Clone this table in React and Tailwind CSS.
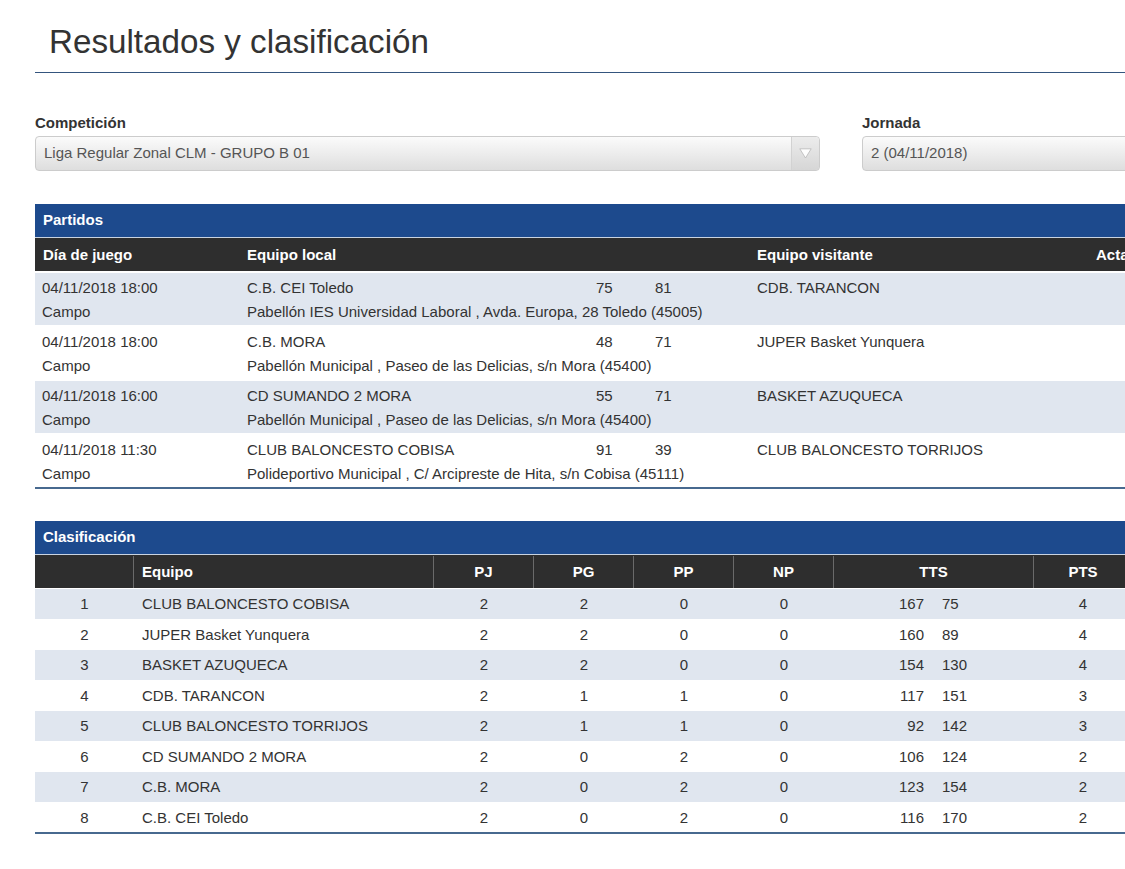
import React from 'react';

const partidos = [
  { fecha: '04/11/2018 18:00', local: 'C.B. CEI Toledo', pl: '75', pv: '81', visitante: 'CDB. TARANCON', campo: 'Pabellón IES Universidad Laboral , Avda. Europa, 28 Toledo (45005)' },
  { fecha: '04/11/2018 18:00', local: 'C.B. MORA', pl: '48', pv: '71', visitante: 'JUPER Basket Yunquera', campo: 'Pabellón Municipal , Paseo de las Delicias, s/n Mora (45400)' },
  { fecha: '04/11/2018 16:00', local: 'CD SUMANDO 2 MORA', pl: '55', pv: '71', visitante: 'BASKET AZUQUECA', campo: 'Pabellón Municipal , Paseo de las Delicias, s/n Mora (45400)' },
  { fecha: '04/11/2018 11:30', local: 'CLUB BALONCESTO COBISA', pl: '91', pv: '39', visitante: 'CLUB BALONCESTO TORRIJOS', campo: 'Polideportivo Municipal , C/ Arcipreste de Hita, s/n Cobisa (45111)' },
];

const clasificacion = [
  [1, 'CLUB BALONCESTO COBISA', 2, 2, 0, 0, 167, 75, 4],
  [2, 'JUPER Basket Yunquera', 2, 2, 0, 0, 160, 89, 4],
  [3, 'BASKET AZUQUECA', 2, 2, 0, 0, 154, 130, 4],
  [4, 'CDB. TARANCON', 2, 1, 1, 0, 117, 151, 3],
  [5, 'CLUB BALONCESTO TORRIJOS', 2, 1, 1, 0, 92, 142, 3],
  [6, 'CD SUMANDO 2 MORA', 2, 0, 2, 0, 106, 124, 2],
  [7, 'C.B. MORA', 2, 0, 2, 0, 123, 154, 2],
  [8, 'C.B. CEI Toledo', 2, 0, 2, 0, 116, 170, 2],
];

function Select({ value, width, arrow }) {
  return (
    <div
      className={`${width} h-[35px] flex items-stretch rounded-[4px] border border-[#cccccc] bg-gradient-to-b from-[#fbfbfb] to-[#dedede] text-[15px] text-[#555]`}
    >
      <div className="flex-1 flex items-center pl-[8px]">{value}</div>
      {arrow && (
        <div className="w-[28px] flex items-center justify-center border-l border-[#d2d2d2] bg-gradient-to-b from-[#ececec] to-[#d6d6d6] rounded-r-[4px]">
          <svg width="13" height="11" viewBox="0 0 13 11">
            <path d="M0.8 0.8 L12.2 0.8 L6.5 10 Z" fill="#fdfdfd" stroke="#b8b8b8" strokeWidth="0.8" strokeLinejoin="round" />
          </svg>
        </div>
      )}
    </div>
  );
}

function BlueBar({ title }) {
  return (
    <div className="h-[34px] flex items-center pl-[8px] bg-[#1d4a8d] text-white font-bold text-[15px] border-b border-[#c9d3e0]">
      {title}
    </div>
  );
}

export default function App() {
  return (
    <div className="w-full min-h-[869px] overflow-hidden bg-white font-['Liberation_Sans',Arial,sans-serif] text-[#333]">
      <div className="w-[1190px] ml-[35px]">
        <h1 className="pt-[22px] pb-[10px] pl-[14px] text-[33.2px] leading-[40px] font-normal text-[#333] border-b border-[#34557e]">
          Resultados y clasificación
        </h1>

        <div className="flex gap-[42px] mt-[40px]">
          <div>
            <div className="text-[15px] leading-[20px] font-bold mb-[3px]">Competición</div>
            <Select value="Liga Regular Zonal CLM - GRUPO B 01" width="w-[785px]" arrow />
          </div>
          <div>
            <div className="text-[15px] leading-[20px] font-bold mb-[3px]">Jornada</div>
            <Select value="2 (04/11/2018)" width="w-[320px]" />
          </div>
        </div>

        <div className="mt-[33px]">
          <BlueBar title="Partidos" />
          <div className="h-[33px] flex items-center bg-[#2e2e2e] text-white font-bold text-[15px] pt-[1px]">
            <div className="w-[204px] pl-[8px]">Día de juego</div>
            <div className="w-[510px] pl-[8px]">Equipo local</div>
            <div className="w-[339px] pl-[8px]">Equipo visitante</div>
            <div className="pl-[8px]">Acta</div>
          </div>
          <div className="border-b-2 border-[#47698f]">
            {partidos.map((p, i) => (
              <div
                key={i}
                className={`flex border-t-2 border-white text-[15px] leading-[23.5px] pt-[3px] pb-[2px] ${i % 2 === 0 ? 'bg-[#e0e6ef]' : 'bg-white'}`}
              >
                <div className="w-[204px] pl-[7px]">
                  <div>{p.fecha}</div>
                  <div>Campo</div>
                </div>
                <div className="w-[510px] pl-[8px]">
                  <div className="flex">
                    <div className="w-[349px]">{p.local}</div>
                    <div className="w-[59px]">{p.pl}</div>
                    <div>{p.pv}</div>
                  </div>
                  <div className="whitespace-nowrap">{p.campo}</div>
                </div>
                <div className="w-[339px] pl-[8px]">{p.visitante}</div>
                <div className="flex-1" />
              </div>
            ))}
          </div>
        </div>

        <div className="mt-[32px] w-[1100px]">
          <BlueBar title="Clasificación" />
          <div className="h-[33px] flex bg-[#2e2e2e] text-white font-bold text-[15px] pt-[1px]">
            <div className="w-[99px] border-r border-[#6a6a6a]" />
            <div className="w-[300px] pl-[8px] flex items-center border-r border-[#6a6a6a]">Equipo</div>
            {['PJ', 'PG', 'PP', 'NP'].map((h) => (
              <div key={h} className="w-[100px] flex items-center justify-center border-r border-[#6a6a6a]">{h}</div>
            ))}
            <div className="w-[200px] flex items-center justify-center border-r border-[#6a6a6a]">TTS</div>
            <div className="w-[98px] flex items-center justify-center">PTS</div>
          </div>
          <div className="border-b-2 border-[#47698f]">
            {clasificacion.map((r, i) => (
              <div
                key={i}
                className={`flex h-[30.5px] items-center border-t border-white text-[15px] pt-[1px] ${i % 2 === 0 ? 'bg-[#e0e6ef]' : 'bg-white'}`}
              >
                <div className="w-[99px] text-center">{r[0]}</div>
                <div className="w-[300px] pl-[8px]">{r[1]}</div>
                <div className="w-[100px] text-center">{r[2]}</div>
                <div className="w-[100px] text-center">{r[3]}</div>
                <div className="w-[100px] text-center">{r[4]}</div>
                <div className="w-[100px] text-center">{r[5]}</div>
                <div className="w-[100px] text-right pr-[10px]">{r[6]}</div>
                <div className="w-[100px] text-left pl-[8px]">{r[7]}</div>
                <div className="w-[98px] text-center">{r[8]}</div>
              </div>
            ))}
          </div>
        </div>
      </div>
    </div>
  );
}
